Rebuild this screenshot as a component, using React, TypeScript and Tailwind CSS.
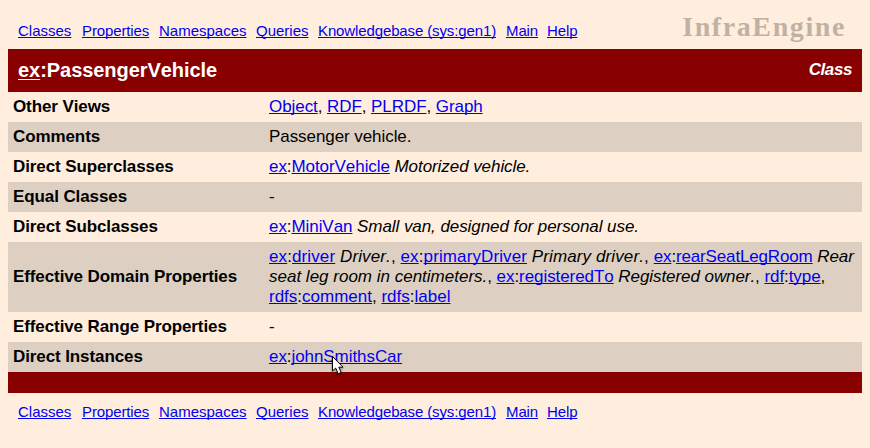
import React from "react";

type LinkSpec = { text: string; w: number; tight?: boolean };

const nav: LinkSpec[] = [
  { text: "Classes", w: 54 },
  { text: "Properties", w: 67, tight: true },
  { text: "Namespaces", w: 87 },
  { text: "Queries", w: 52 },
  { text: "Knowledgebase (sys:gen1)", w: 178, tight: true },
  { text: "Main", w: 31, tight: true },
  { text: "Help", w: 30, tight: true },
];

function A({ children }: { children: React.ReactNode }) {
  return (
    <a href="#" className="text-[#0000ee] underline decoration-1 underline-offset-1 [text-decoration-skip-ink:none]">
      {children}
    </a>
  );
}

function Q({ ns, name }: { ns: string; name: string }) {
  return (
    <>
      <A>{ns}</A>:<A>{name}</A>
    </>
  );
}

function Nav() {
  return (
    <nav className="flex gap-[10px] text-[15px] leading-[18px] whitespace-nowrap">
      {nav.map((n) => (
        <span key={n.text} className={n.tight ? "tracking-[-0.12px]" : ""} style={{ width: n.w }}>
          <A>{n.text}</A>
        </span>
      ))}
    </nav>
  );
}

function Row({ label, shade, children }: { label: string; shade?: boolean; children: React.ReactNode }) {
  return (
    <div className={"flex items-center py-[5px] text-[17px] leading-[20px] " + (shade ? "bg-[#ddd0c2]" : "")}>
      <div className="w-[261px] shrink-0 pl-[5px] font-bold tracking-[-0.1px] whitespace-nowrap">{label}</div>
      <div className="tracking-[-0.07px] whitespace-nowrap">{children}</div>
    </div>
  );
}

export default function App() {
  return (
    <div className="relative h-[448px] w-[870px] overflow-hidden bg-[#ffeedd] px-2 font-['Liberation_Sans',Arial,sans-serif] text-black [font-kerning:none]">
      <header className="flex h-[49px] justify-between pt-[22px] pl-[10px]">
        <Nav />
        <div className="-mt-[12px] mr-[16px] font-['Liberation_Serif',serif] text-[28px] leading-[34px] font-bold tracking-[1.6px] text-[#bfb2a5]">
          InfraEngine
        </div>
      </header>
      <div className="flex h-[43px] items-center justify-between bg-[#880000] px-[10px] pb-[2px] text-white">
        <h1 className="text-[20px] font-bold tracking-[-0.05px]">
          <a href="#" className="underline decoration-1 underline-offset-2">ex</a>:PassengerVehicle
        </h1>
        <span className="text-[17px] font-bold tracking-[-0.4px] italic">Class</span>
      </div>
      <Row label="Other Views">
        <A>Object</A>, <A>RDF</A>, <A>PLRDF</A>, <A>Graph</A>
      </Row>
      <Row label="Comments" shade>Passenger vehicle.</Row>
      <Row label="Direct Superclasses">
        <Q ns="ex" name="MotorVehicle" /> <i>Motorized vehicle.</i>
      </Row>
      <Row label="Equal Classes" shade>-</Row>
      <Row label="Direct Subclasses">
        <Q ns="ex" name="MiniVan" /> <i>Small van, designed for personal use.</i>
      </Row>
      <Row label="Effective Domain Properties" shade>
        <span className="tracking-[0.11px]">
          <Q ns="ex" name="driver" /> <i>Driver.</i>, <Q ns="ex" name="primaryDriver" /> <i>Primary driver.</i>,{" "}
        </span>
        <span className="tracking-[-0.15px]">
          <Q ns="ex" name="rearSeatLegRoom" />
        </span>{" "}
        <i>Rear</i>
        <br />
        <i className="tracking-normal">seat leg room in centimeters.</i>, <Q ns="ex" name="registeredTo" />{" "}
        <i>Registered owner.</i>, <Q ns="rdf" name="type" />,
        <br />
        <span className="tracking-normal">
          <Q ns="rdfs" name="comment" />, <Q ns="rdfs" name="label" />
        </span>
      </Row>
      <Row label="Effective Range Properties">-</Row>
      <Row label="Direct Instances" shade>
        <Q ns="ex" name="johnSmithsCar" />
      </Row>
      <div className="h-[21px] bg-[#880000]" />
      <footer className="pt-[10px] pl-[10px]">
        <Nav />
      </footer>
      <svg className="absolute top-[355px] left-[331px] drop-shadow-[0_1px_1px_rgba(0,0,0,0.4)]" width="14" height="22" viewBox="0 0 14 22">
        <path d="M1.5 1.5v14.5l3.2-2.9 2.5 5.6 3-1.3-2.4-5.2h4.2z" fill="#fff" stroke="#000" strokeWidth="1" />
      </svg>
    </div>
  );
}
